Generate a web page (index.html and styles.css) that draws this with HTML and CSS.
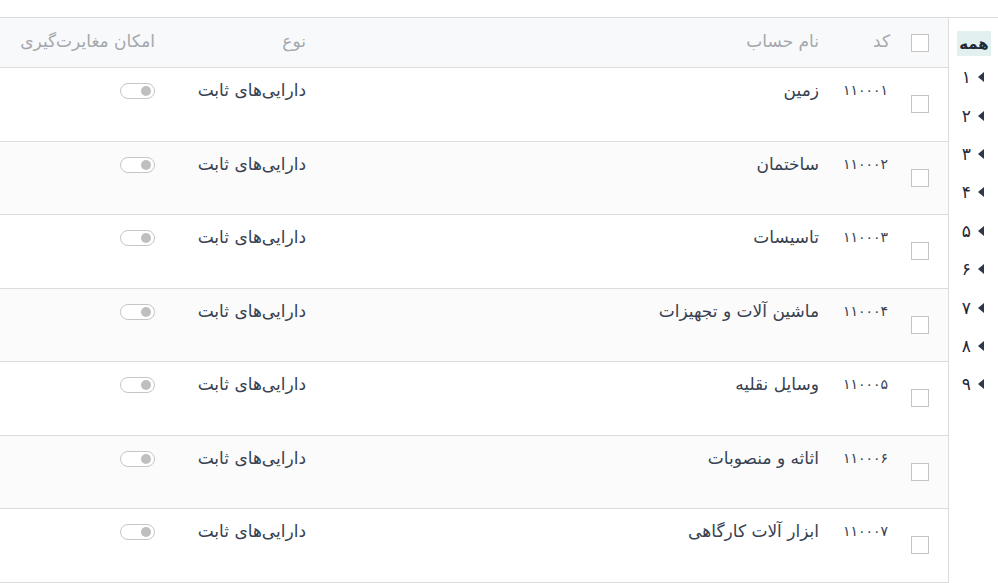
FILE: index.html
```html
<!DOCTYPE html>
<html lang="fa" dir="rtl">
<head>
<meta charset="utf-8">
<link rel="stylesheet" href="styles.css">
</head>
<body>
<div class="page">
  <aside class="sidebar">
    <div class="side-all">همه</div>
    <div class="side-item"><span class="caret"></span><span>۱</span></div>
    <div class="side-item"><span class="caret"></span><span>۲</span></div>
    <div class="side-item"><span class="caret"></span><span>۳</span></div>
    <div class="side-item"><span class="caret"></span><span>۴</span></div>
    <div class="side-item"><span class="caret"></span><span>۵</span></div>
    <div class="side-item"><span class="caret"></span><span>۶</span></div>
    <div class="side-item"><span class="caret"></span><span>۷</span></div>
    <div class="side-item"><span class="caret"></span><span>۸</span></div>
    <div class="side-item"><span class="caret"></span><span>۹</span></div>
  </aside>
  <main class="list">
    <div class="row head">
      <div class="cell cb"><span class="box"></span></div>
      <div class="cell">کد</div>
      <div class="cell">نام حساب</div>
      <div class="cell">نوع</div>
      <div class="cell">امکان مغایرت‌گیری</div>
    </div>
    <div class="row">
      <div class="cell cb"><span class="box"></span></div>
      <div class="cell code">۱۱۰۰۰۱</div>
      <div class="cell">زمین</div>
      <div class="cell">دارایی‌های ثابت</div>
      <div class="cell"><span class="toggle"></span></div>
    </div>
    <div class="row alt">
      <div class="cell cb"><span class="box"></span></div>
      <div class="cell code">۱۱۰۰۰۲</div>
      <div class="cell">ساختمان</div>
      <div class="cell">دارایی‌های ثابت</div>
      <div class="cell"><span class="toggle"></span></div>
    </div>
    <div class="row">
      <div class="cell cb"><span class="box"></span></div>
      <div class="cell code">۱۱۰۰۰۳</div>
      <div class="cell">تاسیسات</div>
      <div class="cell">دارایی‌های ثابت</div>
      <div class="cell"><span class="toggle"></span></div>
    </div>
    <div class="row alt">
      <div class="cell cb"><span class="box"></span></div>
      <div class="cell code">۱۱۰۰۰۴</div>
      <div class="cell">ماشین آلات و تجهیزات</div>
      <div class="cell">دارایی‌های ثابت</div>
      <div class="cell"><span class="toggle"></span></div>
    </div>
    <div class="row">
      <div class="cell cb"><span class="box"></span></div>
      <div class="cell code">۱۱۰۰۰۵</div>
      <div class="cell">وسایل نقلیه</div>
      <div class="cell">دارایی‌های ثابت</div>
      <div class="cell"><span class="toggle"></span></div>
    </div>
    <div class="row alt">
      <div class="cell cb"><span class="box"></span></div>
      <div class="cell code">۱۱۰۰۰۶</div>
      <div class="cell">اثاثه و منصوبات</div>
      <div class="cell">دارایی‌های ثابت</div>
      <div class="cell"><span class="toggle"></span></div>
    </div>
    <div class="row">
      <div class="cell cb"><span class="box"></span></div>
      <div class="cell code">۱۱۰۰۰۷</div>
      <div class="cell">ابزار آلات کارگاهی</div>
      <div class="cell">دارایی‌های ثابت</div>
      <div class="cell"><span class="toggle"></span></div>
    </div>
  </main>
</div>
</body>
</html>
```
FILE: styles.css
```css
html, body {
  margin: 0;
  padding: 0;
  background: #ffffff;
}
body {
  font-family: "DejaVu Sans", "Noto Sans", sans-serif;
  color: #374151;
  font-size: 17px;
}
.page {
  direction: rtl;
  display: flex;
  margin-top: 17px;
  border-top: 1px solid #dcdcdc;
  height: 565px;
}
.sidebar {
  width: 49px;
  flex: none;
  padding-top: 13px;
  box-sizing: border-box;
  display: flex;
  flex-direction: column;
  align-items: flex-start;
  padding-right: 7px;
}
.side-all {
  width: 34px;
  height: 25px;
  background: #e2f1f0;
  color: #1f2937;
  font-size: 15px;
  font-weight: bold;
  display: flex;
  align-items: center;
  justify-content: center;
  margin-bottom: 2px;
}
.side-item {
  display: flex;
  align-items: center;
  gap: 7px;
  height: 38.4px;
  padding-right: 7px;
  font-size: 17px;
  color: #1f2937;
}
.caret {
  width: 0;
  height: 0;
  border-top: 5px solid transparent;
  border-bottom: 5px solid transparent;
  border-right: 6px solid #2d3748;
  border-left: 0;
}
.list {
  flex: 1;
  border-right: 1px solid #dcdcdc;
}
.row {
  display: grid;
  grid-template-columns: 46px 71px 1fr 151px 167px;
  height: 73.5px;
  border-bottom: 1px solid #dcdcdc;
  box-sizing: border-box;
}
.row.alt {
  background: #fbfbfb;
}
.row.head {
  height: 50px;
  background: #f8f9fa;
  color: #a4a8ad;
  font-size: 17px;
}
.cell {
  padding: 11px 12px 0 0;
  line-height: 22px;
  white-space: nowrap;
}
.cell.code {
  font-size: 14px;
  padding-right: 14px;
}
.head .cell {
  padding-top: 12px;
}
.cell.cb {
  padding: 27px 19px 0 0;
}
.head .cell.cb {
  padding-top: 16px;
}
.box {
  display: block;
  width: 16px;
  height: 16px;
  border: 1px solid #c4c4c4;
  background: #ffffff;
}
.toggle {
  display: block;
  position: relative;
  width: 33px;
  height: 14px;
  margin-top: 4px;
  border: 1px solid #c6c6c6;
  border-radius: 9px;
  background: #ffffff;
}
.toggle::after {
  content: "";
  position: absolute;
  top: 2px;
  right: 3px;
  width: 10px;
  height: 10px;
  border-radius: 50%;
  background: #bfbfbf;
}
```
